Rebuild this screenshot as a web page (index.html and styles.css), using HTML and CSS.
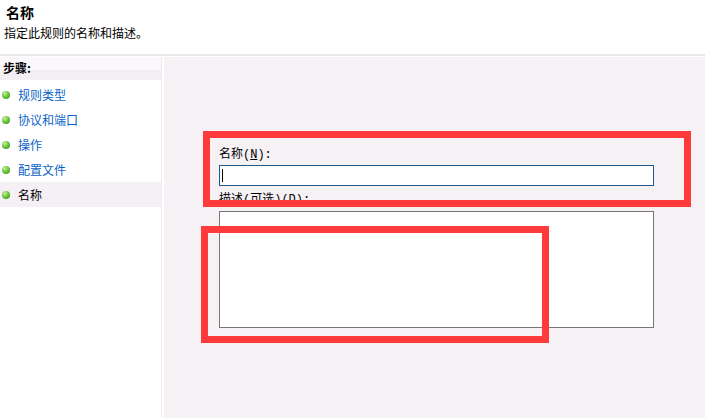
FILE: index.html
```html
<!DOCTYPE html>
<html>
<head><meta charset="utf-8"><title>名称</title>
<link rel="stylesheet" href="styles.css">
</head>
<body>
 <div class="head">
  <h1>名称</h1>
  <p>指定此规则的名称和描述。</p>
 </div>
 <div class="main">
  <div class="side">
   <div class="steps">步骤:</div>
   <ul>
    <li><i></i><a href="#">规则类型</a></li>
    <li><i></i><a href="#">协议和端口</a></li>
    <li><i></i><a href="#">操作</a></li>
    <li><i></i><a href="#">配置文件</a></li>
    <li class="cur"><i></i>名称</li>
   </ul>
  </div>
  <div class="pane">
   <div class="form">
    <label>名称(<u>N</u>):</label>
    <div class="input"><span class="caret"></span></div>
    <label class="l2">描述(可选)(<u>D</u>):</label>
    <div class="area"></div>
   </div>
   <div class="mark m1"></div>
   <div class="mark m2"></div>
  </div>
 </div>
</body>
</html>
```
FILE: styles.css
```css
html{font-family:"Noto Sans CJK SC","Liberation Sans",sans-serif;font-size:12px}
body{margin:0;background:#fff;color:#000;overflow:hidden;height:418px;display:flex;flex-direction:column}
.head{border-bottom:2px solid #ece8ec;margin-bottom:1px;box-sizing:border-box;height:56px}
.head h1{margin:0;padding:3px 0 0 6px;font-size:14px;font-weight:bold;line-height:18px}
.head p{margin:0;padding:5px 0 0 4px;line-height:14px}
.main{flex:1;display:flex}
.side{width:161px;border-right:1px solid #eeeaee;margin-right:2px}
.steps{height:23px;line-height:22px;padding-left:3px;font-weight:bold;background:linear-gradient(#fbf8fb 0,#fbf8fb 55%,#f3eef3 56%,#f3eef3 100%);margin-bottom:2px}
ul{list-style:none;margin:0;padding:0}
li{height:25px;display:flex;align-items:center;padding-left:2px;line-height:23px}
li i{width:8px;height:8px;border-radius:50%;background:radial-gradient(circle at 35% 30%,#c8f0a0 0,#6cc83c 45%,#2f8a12 100%);margin-right:8px}
li a{color:#0a62c8;text-decoration:none}
li.cur{background:#f5f0f5}
.pane{flex:1;background:#f6f1f5;position:relative;padding:90px 0 0 55px}
.form label{display:block;line-height:16px;height:16px;color:#000;font-family:"Liberation Mono","Noto Sans CJK SC",monospace}
.form u{text-decoration:underline}
.input{margin-top:2px;width:435px;height:21px;box-sizing:border-box;border:1px solid #1f5a8c;background:#fff;position:relative}
.caret{position:absolute;left:2px;top:3px;width:1px;height:13px;background:#000}
.l2{margin-top:6px}
.area{margin-top:3px;width:435px;height:117px;box-sizing:border-box;border:1px solid #777;background:#fff}
.mark{position:absolute;border:7px solid #ff3a3a;box-sizing:border-box}
.m1{left:39px;top:74px;width:488px;height:76px}
.m2{left:37px;top:169px;width:348px;height:117px}
```
